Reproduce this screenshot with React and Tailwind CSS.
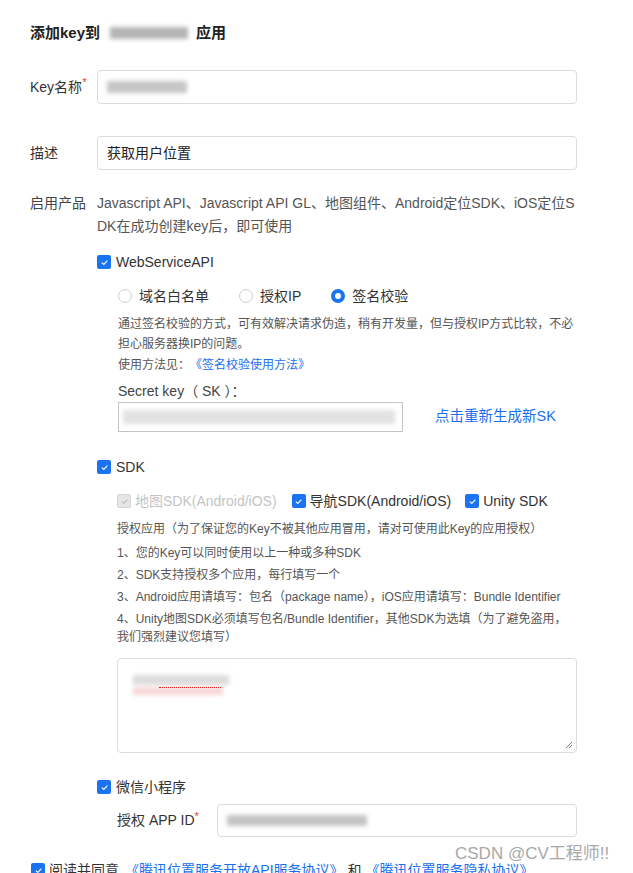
import React from "react";

const FONT = { fontFamily: '"Liberation Sans", "Noto Sans CJK SC", sans-serif' };

const Check = ({ disabled }) => (
  <span
    className={`inline-flex items-center justify-center w-[14px] h-[14px] rounded-[2px] shrink-0 ${
      disabled ? "bg-[#e6e6e6] border border-[#d4d4d4]" : "bg-[#1a73f0]"
    }`}
  >
    <svg width="9" height="9" viewBox="0 0 10 10">
      <path
        d="M2 5.2 L4.2 7.2 L8.2 2.8"
        fill="none"
        stroke={disabled ? "#bdbdbd" : "#fff"}
        strokeWidth="1.2"
      />
    </svg>
  </span>
);

const Radio = ({ checked, label }) => (
  <label className="flex items-center gap-[7px]">
    <span
      className={`w-[14px] h-[14px] rounded-full shrink-0 bg-white ${
        checked ? "border-[4px] border-[#1a73f0]" : "border border-[#d0d0d0]"
      }`}
    />
    <span className="text-[14px] text-[#333]">{label}</span>
  </label>
);

const Blur = ({ className }) => <span className={`block blur-[2px] ${className}`} />;

const App = () => {
  return (
    <div className="relative w-[633px] h-[873px] overflow-hidden bg-white" style={FONT}>
      <div className="pl-[30px] pr-[56px] pt-[24px]">
        <h2 className="flex items-center text-[15px] font-bold text-[#222] h-[18px]">
          添加key到
          <Blur className="ml-[10px] mr-[8px] w-[78px] h-[12px] bg-[#b4b4b4]" />
          应用
        </h2>

        <div className="mt-[28px] flex items-center">
          <div className="w-[67px] text-[14px] text-[#333]">
            Key名称<sup className="text-[#e33] text-[11px]">*</sup>
          </div>
          <div className="flex-1 h-[34px] border border-[#dcdcdc] rounded-[4px] flex items-center px-[9px]">
            <Blur className="w-[80px] h-[12px] bg-[#c6c6c6]" />
          </div>
        </div>

        <div className="mt-[32px] flex items-center">
          <div className="w-[67px] text-[14px] text-[#333]">描述</div>
          <div className="flex-1 h-[34px] border border-[#dcdcdc] rounded-[4px] flex items-center px-[9px] text-[14px] text-[#222]">
            获取用户位置
          </div>
        </div>

        <div className="mt-[22px] flex">
          <div className="w-[67px] text-[14px] text-[#444] leading-[23px]">启用产品</div>
          <div className="flex-1">
            <p className="text-[14px] text-[#555] leading-[23px] break-all">
              Javascript API、Javascript API GL、地图组件、Android定位SDK、iOS定位SDK在成功创建key后，即可使用
            </p>

            <div className="mt-[14px] h-[20px] flex items-center gap-[5px] text-[14px] text-[#333]">
              <Check />
              WebServiceAPI
            </div>

            <div className="pl-[21px]">
              <div className="mt-[14px] h-[20px] flex items-center gap-[30px]">
                <Radio label="域名白名单" />
                <Radio label="授权IP" />
                <Radio checked label="签名校验" />
              </div>
              <p className="mt-[8px] text-[12px] text-[#555] leading-[20px]">
                通过签名校验的方式，可有效解决请求伪造，稍有开发量，但与授权IP方式比较，不必
                <br />
                担心服务器换IP的问题。
              </p>
              <p className="mt-[1px] text-[12px] text-[#555] leading-[20px]">
                使用方法见：<span className="text-[#1a6ff0] ml-[6px]">《签名校验使用方法》</span>
              </p>
              <div className="mt-[6px] h-[20px] flex items-center text-[14px] text-[#444]">
                Secret key（ SK ）：
              </div>
              <div className="mt-[1px] flex items-center">
                <div className="w-[285px] h-[30px] border border-[#c4c4c4] flex items-center px-[4px]">
                  <Blur className="w-[272px] h-[14px] bg-[#e2e2e2]" />
                </div>
                <span className="ml-[32px] text-[14.5px] text-[#1a6ff0]">点击重新生成新SK</span>
              </div>
            </div>

            <div className="mt-[25px] h-[20px] flex items-center gap-[5px] text-[14px] text-[#333]">
              <Check />
              SDK
            </div>

            <div className="pl-[20px]">
              <div className="mt-[14px] h-[20px] flex items-center text-[14px]">
                <span className="flex items-center gap-[4px] text-[#c4c4c4]">
                  <Check disabled />
                  地图SDK(Android/iOS)
                </span>
                <span className="ml-[15px] flex items-center gap-[4px] text-[#333]">
                  <Check />
                  导航SDK(Android/iOS)
                </span>
                <span className="ml-[14px] flex items-center gap-[4px] text-[#333]">
                  <Check />
                  Unity SDK
                </span>
              </div>
              <div className="mt-[7px] text-[12px] text-[#555] leading-[22px]">
                <p className="mb-[2px]">授权应用（为了保证您的Key不被其他应用冒用，请对可使用此Key的应用授权）</p>
                <p>1、您的Key可以同时使用以上一种或多种SDK</p>
                <p>2、SDK支持授权多个应用，每行填写一个</p>
                <p>3、Android应用请填写：包名（package name），iOS应用请填写：Bundle Identifier</p>
                <p className="leading-[18px] mt-[2px]">
                  4、Unity地图SDK必须填写包名/Bundle Identifier，其他SDK为选填（为了避免盗用，
                  <br />
                  我们强烈建议您填写）
                </p>
              </div>
              <div className="relative mt-[12px] h-[95px] border border-[#dcdcdc] rounded-[4px] pl-[15px] pt-[16px]">
                <div className="relative w-[96px]">
                  <Blur className="w-[96px] h-[10px] bg-[#dcdcdc]" />
                  <Blur className="mt-[2px] w-[90px] h-[8px] bg-[#f6d6d6]" />
                  <span className="absolute left-[26px] top-[12px] w-[62px] border-t border-dotted border-[#e02020]" />
                </div>
                <svg className="absolute right-[3px] bottom-[3px]" width="8" height="8" viewBox="0 0 8 8">
                  <path d="M7 1 L1 7 M7 4 L4 7" stroke="#777" strokeWidth="1" />
                </svg>
              </div>
            </div>

            <div className="mt-[24px] h-[20px] flex items-center gap-[5px] text-[14px] text-[#333]">
              <Check />
              微信小程序
            </div>
            <div className="pl-[20px] mt-[7px] flex items-center">
              <div className="w-[100px] text-[14px] text-[#333]">
                授权 APP ID<sup className="text-[#e33] text-[11px]">*</sup>
              </div>
              <div className="flex-1 h-[33px] border border-[#dcdcdc] rounded-[4px] flex items-center px-[9px]">
                <Blur className="w-[140px] h-[11px] bg-[#c4c4c4]" />
              </div>
            </div>
          </div>
        </div>

        <div className="ml-[1px] mt-[23px] h-[20px] flex items-center gap-[4px] text-[14px] text-[#333]">
          <Check />
          阅读并同意
          <span className="text-[#1a6ff0] ml-[2px]">《腾讯位置服务开放API服务协议》</span>
          <span>和</span>
          <span className="text-[#1a6ff0]">《腾讯位置服务隐私协议》</span>
        </div>
      </div>

      <div className="absolute left-[455px] top-[843px] text-[17px] leading-[22px] text-[#a8a8a8]">
        CSDN @CV工程师!!
      </div>
    </div>
  );
};

export default App;
